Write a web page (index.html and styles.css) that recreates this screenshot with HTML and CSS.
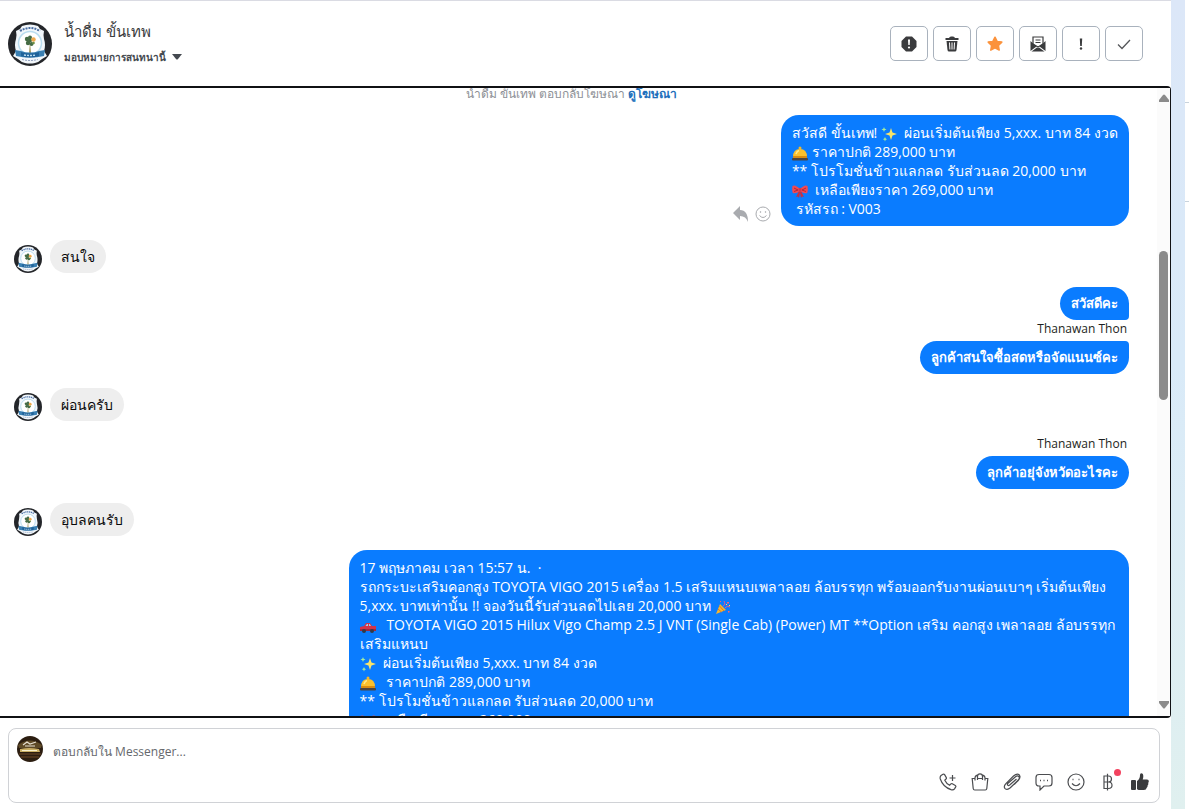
FILE: index.html
```html
<!DOCTYPE html>
<html lang="th">
<head>
  <meta charset="utf-8">
  <meta name="viewport" content="width=device-width, initial-scale=1">
  <title>น้ำดื่ม ขั้นเทพ</title>
  <link rel="stylesheet" href="styles.css">
</head>
<body>

<!-- shared symbols -->
<svg class="defs" aria-hidden="true">
  <symbol id="logo" viewBox="0 0 44 44">
    <circle cx="22" cy="22" r="22" fill="#24262a"/>
    <path d="M14 4q8-3 16 0l2 3 4 2q-1 4 0 8 2 6 0 12l3 5-5 3q-3 3-7 4-5 1-10 0-4-1-7-4l-5-3 3-5q-2-6 0-12 1-4 0-8l4-2z" fill="#f2f7fb"/>
    <path d="M12 9q10-6 20 0" fill="none" stroke="#4a6ea3" stroke-width="2" stroke-dasharray="2 1"/>
    <circle cx="22" cy="21" r="11.500" fill="#fff" stroke="#b9dcef" stroke-width="1.500"/>
    <path d="M22 20l-1 11h2z" fill="#a3965c"/>
    <g fill="#456b45">
      <circle cx="19" cy="17" r="2.200"/><circle cx="22" cy="15.500" r="2"/>
      <circle cx="20" cy="21" r="2.200"/><circle cx="23.500" cy="22" r="2"/><circle cx="22" cy="18.500" r="2"/>
    </g>
    <circle cx="25.500" cy="17.500" r="2.200" fill="#f0a94d"/>
    <circle cx="25.500" cy="21" r="1.300" fill="#6f8f46"/>
    <path d="M7 28l6 1q9 3 18 0l6-1-1 6q-14 3-28 0z" fill="#3a80b3"/>
    <path d="M13 30q9 3 18 0v4q-9 3-18 0z" fill="#1f6299"/>
    <path d="M16 33q6 1 12 0" fill="none" stroke="#b9dcf0" stroke-width="1.500" stroke-dasharray="2 1"/>
    <path d="M14 37.500q8 2 16 0" fill="none" stroke="#8b9bbb" stroke-dasharray="2 1"/>
  </symbol>
  <symbol id="sparkles" viewBox="0 0 16 16">
    <path d="M10 2l1.500 4.500L16 8l-4.500 1.500L10 14l-1.500-4.500L4 8l4.500-1.500z" fill="#f9e46a"/>
    <path d="M3 1l.7 1.800L5.500 3.500l-1.800.7L3 6l-.7-1.800L.5 3.500l1.800-.7zM4 11l.7 1.500 1.500.7-1.500.6L4 15.500l-.7-1.700-1.500-.6 1.500-.7z" fill="#a6ee9c"/>
  </symbol>
  <symbol id="bell" viewBox="0 0 16 16">
    <circle cx="8" cy="3" r="1.500" fill="#f3b72c"/>
    <path d="M1 12q0-8 7-8t7 8z" fill="#fbc02d"/>
    <path d="M4 9q1-3 3-3.500" fill="none" stroke="#ffe88a" stroke-width="1.500"/>
    <rect x="1" y="11" width="14" height="2" fill="#d98c12"/>
    <rect x="0" y="13" width="16" height="2.500" rx="1" fill="#4d4540"/>
  </symbol>
  <symbol id="bow" viewBox="0 0 16 16">
    <path d="M7 8l-3 6 2-.5 1 1.500 1-5 1 5 1-1.500 2 .5-3-6z" fill="#c62f43"/>
    <path d="M8 6Q3 1 .5 3q-.8 4 .3 7Q4 11 8 8q4 3 7.200 2 1.100-3 .3-7Q13 1 8 6z" fill="#f04a55"/>
    <path d="M2 5l4 2-4 1.500M14 5l-4 2 4 1.500" fill="none" stroke="#b1283b"/>
    <rect x="6.500" y="5" width="3" height="4" rx="1" fill="#d9364a"/>
  </symbol>
  <symbol id="party" viewBox="0 0 16 16">
    <path d="M1 15L5 5l6 6z" fill="#f7b62d"/>
    <path d="M3 10l3.500 3M4.500 7l4.500 5" stroke="#e0752b"/>
    <path d="M8 7q3-1 1-5M10 9q2-3 5-1" fill="none" stroke="#e55b8b"/>
    <path d="M5 2h1v1H5zM12 3h2v1.500h-2zM13 12h1.500v1.500H13z" fill="#ff6171"/>
    <path d="M11 5h1v1h-1zM14 6h1v1h-1z" fill="#ffe264"/>
  </symbol>
  <symbol id="car" viewBox="0 0 16 16">
    <path d="M0 9l4-1 2-3h4l2 3h4v5H0z" fill="#d3344a"/>
    <path d="M5.500 8L7 6h1v2zM9 6h.8L11 8H9z" fill="#9fd0ee"/>
    <path d="M0 11h16v2H0z" fill="#a3273c"/>
    <circle cx="4" cy="13" r="2" fill="#343a45"/><circle cx="12" cy="13" r="2" fill="#343a45"/>
  </symbol>
</svg>

<div class="app">
  <main class="chat">

    <header class="chat-header">
      <svg class="avatar-lg"><use href="#logo"/></svg>
      <div class="who">
        <h1>น้ำดื่ม ขั้นเทพ</h1>
        <button class="assign" type="button">มอบหมายการสนทนานี้
          <svg width="10" height="6" viewBox="0 0 10 6"><path d="M0 0h10L6 5q-1 1-2 0z" fill="#444950"/></svg>
        </button>
      </div>
      <div class="actions">
        <button type="button" aria-label="สแปม">
          <svg viewBox="0 0 16 16"><path d="M5 .5h6L15.500 5v6L11 15.500H5L.5 11V5z" fill="#3a3b3d"/><path d="M7 3.500h2l-.3 5.500H7.300z" fill="#fff"/><circle cx="8" cy="11.500" r="1.100" fill="#fff"/></svg>
        </button>
        <button type="button" aria-label="ลบ">
          <svg viewBox="0 0 16 16"><path d="M1.500 3V2H5q.5-1.500 2-1.500h2q1.500 0 2 1.500h3.500v2h-13z" fill="#3a3b3d"/><path d="M2.500 5h11l-1 9q-.2 1.500-1.500 1.500H5q-1.300 0-1.500-1.500z" fill="#3a3b3d"/><path d="M5.500 6.500l.4 7M8 6.500v7M10.500 6.500l-.4 7" stroke="#fff"/></svg>
        </button>
        <button type="button" aria-label="ติดดาว">
          <svg viewBox="0 0 16 16"><path d="M8 1.200l2.100 4.200 4.700.7-3.400 3.300.8 4.700L8 11.900l-4.200 2.200.8-4.700-3.400-3.300 4.700-.7z" fill="#fb923c" stroke="#fb923c" stroke-width="1.500" stroke-linejoin="round"/></svg>
        </button>
        <button type="button" aria-label="ทำเครื่องหมายว่ายังไม่ได้อ่าน">
          <svg viewBox="0 0 16 16"><path d="M3 8V1h10v7L8 11z" fill="#fff" stroke="#3a3b3d" stroke-width="1.200"/><path d="M5.500 4h5M5.500 6.500h5" stroke="#3a3b3d"/><path d="M.5 5l6 5.500-6 4.500zM15.500 5l-6 5.500 6 4.500zM1.500 15.500l5.500-4 1 .7 1-.7 5.500 4z" fill="#3a3b3d"/></svg>
        </button>
        <button type="button" aria-label="ติดตามผล">
          <svg viewBox="0 0 16 16"><path d="M6.800 2.500h2.400L8.800 10H7.200z" fill="#3a3b3d"/><circle cx="8" cy="12.500" r="1.200" fill="#3a3b3d"/></svg>
        </button>
        <button type="button" aria-label="เสร็จสิ้น">
          <svg viewBox="0 0 16 16"><path d="M2 8.500l4 4 8-8.500" fill="none" stroke="#55575a" stroke-width="1.300"/></svg>
        </button>
      </div>
    </header>

    <section class="thread">
      <div class="messages">
        <p class="note">น้ำดื่ม ขั้นเทพ ตอบกลับโฆษณา <a href="#">ดูโฆษณา</a></p>

        <div class="row sent first">
          <div class="tools">
            <button type="button" aria-label="ตอบกลับ"><svg viewBox="0 0 16 16"><path d="M7 0v4q8 0 8 12-2-6-8-6v4L0 7z" fill="#a9abaf"/></svg></button>
            <button type="button" aria-label="แสดงความรู้สึก"><svg viewBox="0 0 16 16" fill="none" stroke="#a9abaf"><circle cx="8" cy="8" r="7"/><path d="M4.500 9.500q3.500 4 7 0"/><circle cx="5.500" cy="6" r=".4"/><circle cx="10.500" cy="6" r=".4"/></svg></button>
          </div>
          <div class="bubble long">
            สวัสดี ขั้นเทพ! <svg class="emoji"><use href="#sparkles"/></svg> &nbsp;ผ่อนเริ่มต้นเพียง 5,xxx. บาท 84 งวด<br>
            <svg class="emoji"><use href="#bell"/></svg> ราคาปกติ 289,000 บาท<br>
            ** โปรโมชั่นข้าวแลกลด รับส่วนลด 20,000 บาท<br>
            <svg class="emoji"><use href="#bow"/></svg> &nbsp;เหลือเพียงราคา 269,000 บาท<br>
            &nbsp;รหัสรถ : V003
          </div>
        </div>

        <div class="row">
          <svg class="avatar-sm"><use href="#logo"/></svg>
          <div class="bubble">สนใจ</div>
        </div>

        <div class="row sent">
          <div class="bubble short head">สวัสดีคะ</div>
        </div>
        <p class="sender">Thanawan Thon</p>
        <div class="row sent joined">
          <div class="bubble short tail">ลูกค้าสนใจซื้อสดหรือจัดแนนซ์คะ</div>
        </div>

        <div class="row">
          <svg class="avatar-sm"><use href="#logo"/></svg>
          <div class="bubble">ผ่อนครับ</div>
        </div>

        <p class="sender apart">Thanawan Thon</p>
        <div class="row sent joined">
          <div class="bubble short">ลุกค้าอยุ่จังหวัดอะไรคะ</div>
        </div>

        <div class="row">
          <svg class="avatar-sm"><use href="#logo"/></svg>
          <div class="bubble">อุบลคนรับ</div>
        </div>

        <div class="row sent">
          <div class="bubble long post">
            17 พฤษภาคม เวลา 15:57 น. &nbsp;·<br>
            รถกระบะเสริมคอกสูง TOYOTA VIGO 2015 เครื่อง 1.5 เสริมแหนบเพลาลอย ล้อบรรทุก พร้อมออกรับงานผ่อนเบาๆ เริ่มต้นเพียง<br>
            5,xxx. บาทเท่านั้น !! จองวันนี้รับส่วนลดไปเลย 20,000 บาท <svg class="emoji"><use href="#party"/></svg><br>
            <svg class="emoji"><use href="#car"/></svg> &nbsp; TOYOTA VIGO 2015 Hilux Vigo Champ 2.5 J VNT (Single Cab) (Power) MT **Option เสริม คอกสูง เพลาลอย ล้อบรรทุก<br>
            เสริมแหนบ<br>
            <svg class="emoji"><use href="#sparkles"/></svg> &nbsp;ผ่อนเริ่มต้นเพียง 5,xxx. บาท 84 งวด<br>
            <svg class="emoji"><use href="#bell"/></svg> &nbsp; ราคาปกติ 289,000 บาท<br>
            ** โปรโมชั่นข้าวแลกลด รับส่วนลด 20,000 บาท<br>
            <svg class="emoji"><use href="#bow"/></svg> &nbsp;เหลือเพียงราคา 269,000 บาท
          </div>
        </div>
      </div>

      <div class="scrollbar" aria-hidden="true">
        <svg viewBox="0 0 10 8"><path d="M4 1q1-1 2 0l4 5v2H0V6z" fill="#8b8b8b"/></svg>
        <div class="track"><div class="thumb"></div></div>
        <svg viewBox="0 0 10 8"><path d="M4 7q1 1 2 0l4-5V0H0v2z" fill="#8b8b8b"/></svg>
      </div>
    </section>

    <form class="composer">
      <svg class="page-pic" viewBox="0 0 26 26">
        <circle cx="13" cy="13" r="13" fill="#2b1d10"/>
        <path d="M1 9q12-9 24 0l-1 3H2z" fill="#5e4a26"/>
        <path d="M6 9l4-3 3 2 6-2M8 10h10" stroke="#e6dfd0" stroke-width="1.200" fill="none"/>
        <path d="M3 13q9-2 19 0l1 3H3z" fill="#c9ae63"/>
        <path d="M5 14.500h15" stroke="#f8efcc"/>
        <path d="M2 18h22M4 21h18" stroke="#6e4825"/>
      </svg>
      <textarea rows="1" aria-label="ตอบกลับใน Messenger" placeholder="ตอบกลับใน Messenger..."></textarea>
      <div class="composer-tools">
        <button type="button" aria-label="โทร"><svg viewBox="0 0 18 18"><path d="M2 2.500l2-1.300q1-.5 1.600.4l1.700 3q.4.800-.3 1.400L5.800 7.200q1.500 3.300 4.800 5l1.300-1.300q.6-.6 1.400-.2l3 1.700q.9.600.4 1.500l-1.200 1.900q-1.100 1.500-3.500.8Q4 14 1.300 6 .7 3.800 2 2.500z"/><path d="M13.500 2v6M10.500 5h6"/></svg></button>
        <button type="button" aria-label="สินค้า"><svg viewBox="0 0 18 18"><path d="M4 5.500H1.200l1 10q.2 1.500 1.500 1.500h10.600q1.300 0 1.500-1.500l1-10H14M6.500 5.500h5M4 7.500V5q0-2.300 2.300-2.800M14 7.500V5q0-2.300-2.300-2.800M6.500 7V3.500Q6.500.8 9 .8t2.500 2.700V7"/></svg></button>
        <button type="button" aria-label="แนบไฟล์"><svg viewBox="0 0 18 18"><path d="M13.500 6l-6.800 6q-1.200 1-2 .2t.3-2l7.500-6.500q2-1.500 3.300-.2t-.3 3.300l-8.200 8q-3 2.700-5.200.8-1.900-2.200.8-5L10.500 3q3.500-3 5.700-1.200 2 2.200-1 5.700l-4 4"/></svg></button>
        <button type="button" aria-label="ข้อความตอบกลับ"><svg viewBox="0 0 18 18"><path d="M4 1.500h10q3 0 3 3V10q0 3-3 3H9l-4 4v-4H4q-3 0-3-3V4.500q0-3 3-3z"/><path d="M5 7.500h1M8.500 7.500h1M12 7.500h1" stroke-width="1.600"/></svg></button>
        <button type="button" aria-label="อิโมจิ"><svg viewBox="0 0 18 18"><circle cx="9" cy="9" r="8"/><path d="M5 10.500q4 4.500 8 0"/><path d="M5.500 6.500h1M11.500 6.500h1" stroke-width="1.600"/></svg></button>
        <button type="button" class="pay" aria-label="การชำระเงิน"><svg viewBox="0 0 18 18"><path d="M5 3h4.500q3 0 3 3t-3 3q3.500 0 3.500 3.200t-3.500 3.300H5zM5 9h4.500M8.500.8v16.700"/></svg><span class="dot"></span></button>
        <button type="button" aria-label="ถูกใจ"><svg viewBox="0 0 18 18"><path d="M0 8q0-1 1-1h3q1 0 1 1v8q0 1-1 1H1q-1 0-1-1zM6 8q3-2 3-6Q9 .3 10.300.3q2 0 2 3 0 1.700-.6 3.200H16q2 .2 1.800 2 0 .8-.6 1.300.6 1.700-.6 2.700.2 1.500-.9 2.200Q15.300 17 13 17H8q-1.300 0-2-1z" fill="#3a3b3d" stroke="none"/></svg></button>
      </div>
    </form>
  </main>

  <div class="gutter"></div>
  <aside class="edge"></aside>
</div>

</body>
</html>
```
FILE: styles.css
```css
* {
  box-sizing: border-box;
}

body {
  margin: 0;
  font-family: "Open Sans", "Noto Sans", sans-serif;
  font-size: 14px;
  line-height: 19px;
  color: #1c1e21;
  background: #fff;
}

button {
  padding: 0;
  border: 0;
  background: none;
  font: inherit;
  color: inherit;
  cursor: pointer;
}

h1, p {
  margin: 0;
}

svg {
  flex: none;
}

.defs {
  display: none;
}

.app {
  display: flex;
  height: 100vh;
}

.chat {
  display: flex;
  flex: 1;
  flex-direction: column;
  min-width: 0;
  border-top: 1px solid #dadbe3;
}

/* side strip */
.gutter {
  width: 14px;
  background: linear-gradient(#dce7f8, #d9eaf8 45%, #e0f0ef);
}

.edge {
  width: 4px;
  background: linear-gradient(#c9d3dc, #c9d3dc) 0 102px / 100% 1px no-repeat,
    linear-gradient(#c9d3dc, #c9d3dc) 0 201px / 100% 1px no-repeat;
}

/* header */
.chat-header {
  display: flex;
  flex: none;
  align-items: center;
  height: 85px;
  padding: 0 28px 0 8px;
}

.avatar-lg {
  width: 44px;
  height: 44px;
}

.who {
  flex: 1;
  padding-left: 12px;
}

.who h1 {
  font-size: 15px;
  font-weight: 500;
  line-height: 24px;
  color: #3a3b3d;
}

.assign {
  display: flex;
  align-items: center;
  gap: 6px;
  padding-top: 2px;
  font-size: 10px;
  font-weight: 600;
  line-height: 24px;
  color: #444950;
}

.actions {
  display: flex;
  gap: 5px;
}

.actions button {
  display: flex;
  align-items: center;
  justify-content: center;
  width: 38px;
  height: 35px;
  border: 1px solid #a9b2bd;
  border-radius: 5px;
}

.actions svg {
  width: 16px;
  height: 16px;
}

/* conversation */
.thread {
  display: flex;
  flex: 1;
  min-height: 0;
  border: 2px solid #101114;
  border-width: 2px 1px 2px 0;
  border-radius: 0 4px 4px 0;
}

.messages {
  flex: 1;
  min-width: 0;
  padding: 0 28px 0 14px;
  overflow: hidden;
}

.note {
  margin-top: -4px;
  font-size: 12px;
  text-align: center;
  color: #8d9096;
}

.note a {
  color: #216fbb;
  font-weight: 600;
  text-decoration: none;
}

.row {
  display: flex;
  align-items: flex-end;
  gap: 8px;
  margin-top: 14px;
}

.row.first {
  margin-top: 12px;
}

.row.sent {
  justify-content: flex-end;
}

.row.joined {
  margin-top: 0;
}

.avatar-sm {
  width: 28px;
  height: 28px;
}

.bubble {
  padding: 7px 11px;
  border-radius: 17px;
  background: #eee;
  color: #080809;
}

.sent .bubble {
  background: #0a7cff;
  color: #fff;
}

.sent .short {
  font-size: 13px;
  font-weight: 600;
}

.sent .head {
  border-bottom-right-radius: 4px;
}

.sent .tail {
  border-top-right-radius: 4px;
}

.sent .long {
  padding: 8px 11px;
  border-radius: 18px;
}

.sent .post {
  width: 70%;
}

.emoji {
  width: 16px;
  height: 16px;
  vertical-align: -4px;
}

.sender {
  padding: 0 2px 4px 0;
  font-size: 12px;
  line-height: 17px;
  text-align: right;
}

.sender.apart {
  margin-top: 14px;
}

.tools {
  display: flex;
  gap: 6px;
  padding: 0 2px 4px 0;
}

.tools button,
.tools svg {
  display: block;
  width: 16px;
  height: 16px;
}

/* scrollbar */
.scrollbar {
  display: flex;
  flex-direction: column;
  align-items: center;
  width: 13px;
  padding: 6px 0 7px;
  background: #fbfbfb;
}

.scrollbar svg {
  width: 10px;
  height: 8px;
}

.track {
  flex: 1;
  width: 9px;
}

.track::before {
  content: "";
  display: block;
  height: 149px;
}

.thumb {
  height: 149px;
  border-radius: 5px;
  background: #8b8b8b;
}

/* composer */
.composer {
  display: grid;
  flex: none;
  grid-template-columns: 26px 1fr;
  column-gap: 10px;
  height: 75px;
  margin: 10px 11px 6px 8px;
  padding: 7px 10px 11px 8px;
  border: 1px solid #d0d2d6;
  border-radius: 8px;
}

.page-pic {
  width: 26px;
  height: 26px;
}

.composer textarea {
  height: 31px;
  padding: 6px 0;
  border: 0;
  outline: 0;
  resize: none;
  overflow: hidden;
  background: none;
  font: 12px/19px "Open Sans", "Noto Sans", sans-serif;
}

.composer textarea::placeholder {
  color: #65686c;
}

.composer-tools {
  display: flex;
  grid-column: 1 / -1;
  align-self: end;
  justify-content: flex-end;
  gap: 14px;
}

.composer-tools button {
  position: relative;
  height: 18px;
}

.composer-tools svg {
  display: block;
  width: 18px;
  height: 18px;
  fill: none;
  stroke: #4b4d50;
  stroke-width: 1.2;
}

.dot {
  position: absolute;
  top: -4px;
  right: -4px;
  width: 7px;
  height: 7px;
  border-radius: 50%;
  background: #f3425f;
}
```
